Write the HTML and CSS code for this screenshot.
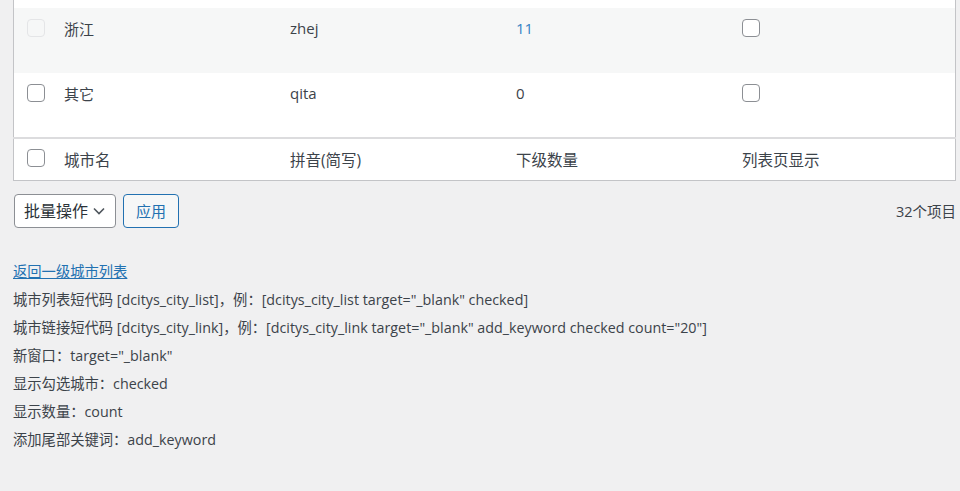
FILE: index.html
```html
<!DOCTYPE html>
<html lang="zh-CN">
<head>
    <meta charset="UTF-8">
    <title>城市列表</title>
    <link rel="stylesheet" href="styles.css">
</head>
<body>

<div class="wrap">
    <table class="city-table">
        <tbody>
            <tr class="prev">
                <td class="col-cb"></td>
                <td class="col-w"></td>
                <td class="col-w"></td>
                <td class="col-w"></td>
                <td></td>
            </tr>
            <tr class="alt">
                <td class="col-cb"><input type="checkbox" class="faint"></td>
                <td>浙江</td>
                <td>zhej</td>
                <td><a href="#" class="num-link">11</a></td>
                <td><input type="checkbox"></td>
            </tr>
            <tr>
                <td class="col-cb"><input type="checkbox"></td>
                <td>其它</td>
                <td>qita</td>
                <td>0</td>
                <td><input type="checkbox"></td>
            </tr>
        </tbody>
        <tfoot>
            <tr>
                <th class="col-cb"><input type="checkbox"></th>
                <th>城市名</th>
                <th>拼音(简写)</th>
                <th>下级数量</th>
                <th>列表页显示</th>
            </tr>
        </tfoot>
    </table>

    <div class="tablenav">
        <div class="bulk">
            <select class="bulk-select">
                <option>批量操作</option>
            </select>
            <button class="btn">应用</button>
        </div>
        <div class="count">32个项目</div>
    </div>

    <div class="notes">
        <a href="#" class="back">返回一级城市列表</a>
        <div>城市列表短代码 [dcitys_city_list]，例：[dcitys_city_list target="_blank" checked]</div>
        <div>城市链接短代码 [dcitys_city_link]，例：[dcitys_city_link target="_blank" add_keyword checked count="20"]</div>
        <div>新窗口：target="_blank"</div>
        <div>显示勾选城市：checked</div>
        <div>显示数量：count</div>
        <div>添加尾部关键词：add_keyword</div>
    </div>
</div>

</body>
</html>
```

FILE: styles.css
```css
body {
    margin: 0;
    background-color: #f0f0f1;
    color: #3c434a;
    font-family: "Open Sans", "Noto Sans CJK SC", sans-serif;
    font-size: 14.3px;
}

.wrap {
    margin: 0 4px 0 13px;
}

.city-table {
    width: 943px;
    border: 1px solid #c3c4c7;
    border-top: none;
    border-collapse: collapse;
    background: #fff;
    table-layout: fixed;
    font-size: 15px;
}

.city-table td, .city-table th {
    text-align: left;
    vertical-align: top;
    font-weight: normal;
    padding: 10px 10px 0;
}

.city-table .col-w {
    width: 206px;
}

.city-table tbody tr {
    height: 65px;
}

.city-table tbody tr.prev {
    height: 8px;
}

.city-table tr.prev td {
    padding: 0 10px;
}

.city-table tr.prev .col-cb {
    padding: 0 0 0 13px;
}

.city-table tr.alt {
    background-color: #f6f7f7;
}

.city-table .col-cb {
    width: 27px;
    padding-left: 13px;
    padding-right: 0;
}

.city-table tfoot th {
    border-top: 2px solid #dcdcde;
    height: 42px;
    box-sizing: border-box;
    padding-top: 9px;
    font-size: 15.5px;
}

.num-link {
    color: #3582c4;
    text-decoration: none;
}

input[type="checkbox"] {
    appearance: none;
    display: block;
    width: 18px;
    height: 18px;
    margin: 1px 0 0;
    border: 1px solid #8c8f94;
    border-radius: 4px;
    background: #fff;
}

input[type="checkbox"].faint {
    border-color: #e4e5e7;
    background: #f6f7f7;
}

.tablenav {
    display: flex;
    justify-content: space-between;
    align-items: center;
    margin-top: 13px;
    width: 943px;
}

.bulk {
    display: flex;
    gap: 7px;
    align-items: center;
}

.bulk-select {
    appearance: none;
    margin-left: 1px;
    width: 102px;
    height: 34px;
    padding: 0 24px 0 9px;
    font-family: inherit;
    font-size: 16px;
    color: #2c3338;
    border: 1px solid #8c8f94;
    border-radius: 4px;
    background: #fff url("data:image/svg+xml,%3Csvg xmlns='http://www.w3.org/2000/svg' width='12' height='8' viewBox='0 0 12 8'%3E%3Cpath d='M1 1.5l5 5 5-5' fill='none' stroke='%2350575e' stroke-width='1.6'/%3E%3C/svg%3E") no-repeat right 10px center;
}

.btn {
    height: 34px;
    padding: 0 12px;
    font-family: inherit;
    font-size: 15px;
    color: #2271b1;
    background: #f6f7f7;
    border: 1px solid #2271b1;
    border-radius: 4px;
}

.count {
    font-size: 14.5px;
}

.notes {
    margin-top: 30px;
    line-height: 28px;
}

.back {
    color: #2271b1;
}
```
